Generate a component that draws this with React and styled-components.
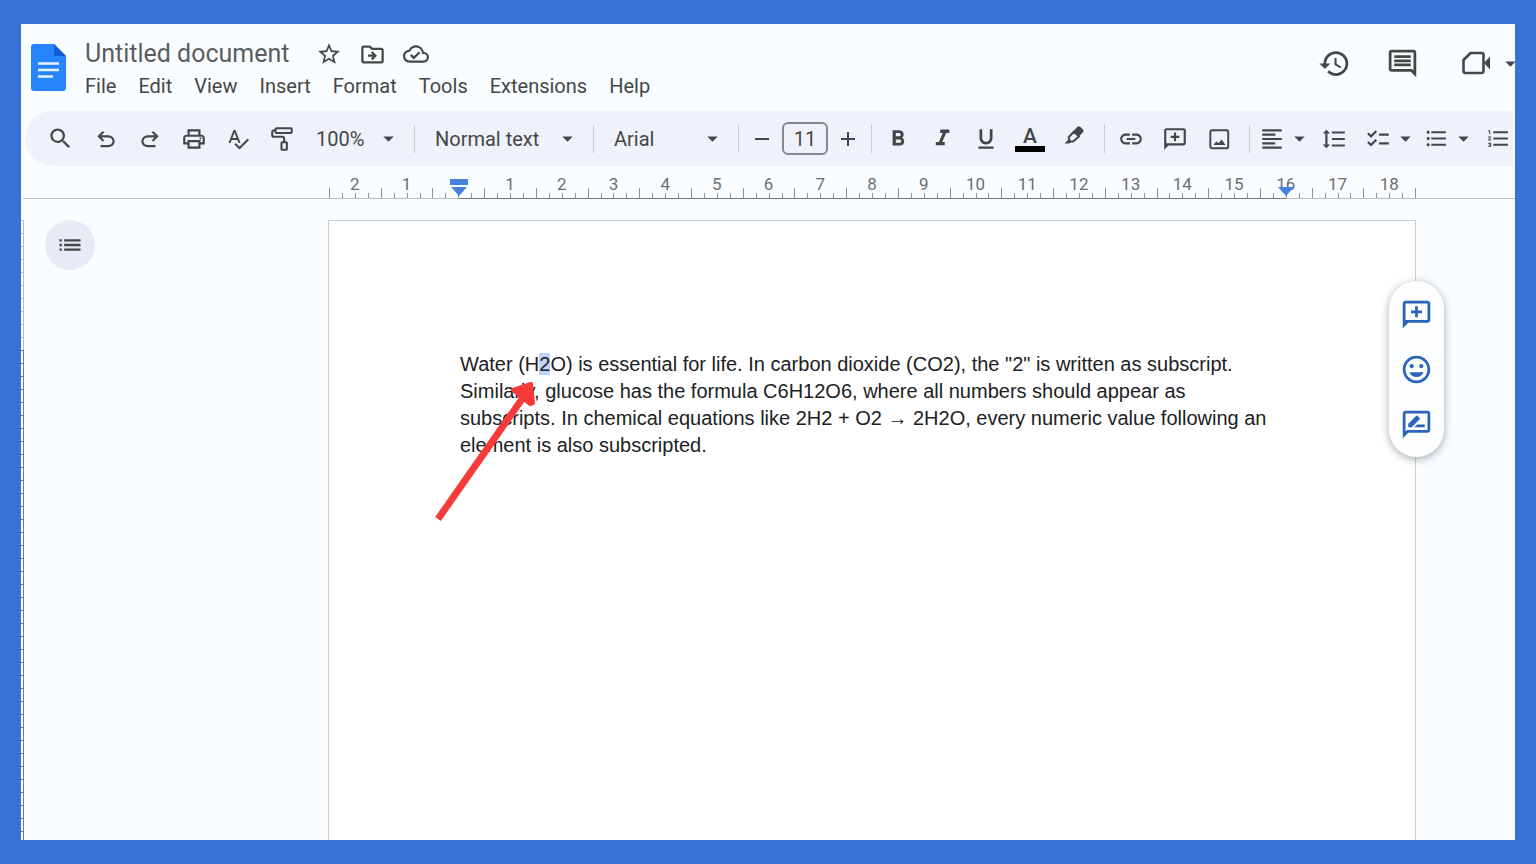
import { styled, createGlobalStyle } from 'styled-components';
import {
	MdArrowDropDown,
	MdAdd,
	MdChecklist,
	MdFormatAlignLeft,
	MdFormatBold,
	MdFormatItalic,
	MdFormatLineSpacing,
	MdFormatListBulleted,
	MdFormatListNumbered,
	MdFormatUnderlined,
	MdHistory,
	MdLink,
	MdList,
	MdOutlineCloudDone,
	MdOutlineComment,
	MdOutlineDriveFileMove,
	MdOutlineInsertEmoticon,
	MdOutlinePrint,
	MdOutlineRateReview,
	MdRemove,
	MdSearch,
	MdSpellcheck,
	MdStarBorder,
} from 'react-icons/md';

const GlobalStyle = createGlobalStyle`
	* {
		box-sizing: border-box;
	}

	body {
		margin: 0;
		font-family: Roboto, 'Liberation Sans', sans-serif;
		color: #444746;
	}

	button,
	input,
	select {
		margin: 0;
		padding: 0;
		border: 0;
		background: none;
		color: inherit;
		font: inherit;
	}

	svg {
		display: block;
		flex-shrink: 0;
	}
`;

const Frame = styled.div`
	display: flex;
	min-height: 100vh;
	padding: 24px 21px;
	background-color: #3871d8;
`;

const Editor = styled.div`
	display: flex;
	flex: 1;
	flex-direction: column;
	min-width: 0;
	overflow: hidden;
	background-color: #f9fdff;
`;

const Header = styled.header`
	display: flex;
	align-items: flex-start;
	height: 87px;
	padding: 14px 0 0 10px;
`;

const LogoLink = styled.a`
	margin: 6px 19px 0 0;
`;

const TitleRow = styled.div`
	display: flex;
	align-items: center;
	gap: 17px;
	height: 32px;
`;

const Title = styled.h1`
	margin: 0 10px 0 0;
	color: #5a5d60;
	font-size: 25px;
	font-weight: 400;
	line-height: 32px;
`;

const IconButton = styled.button`
	display: flex;
	flex-shrink: 0;
	justify-content: center;
	align-items: center;
	width: ${(props) => props.$width || 'auto'};
	height: 32px;
	color: ${(props) => props.$color || '#444746'};
	cursor: pointer;
`;

const Menu = styled.nav`
	display: flex;
	gap: 22px;
`;

const MenuButton = styled.button`
	font-size: 20px;
	line-height: 32px;
	cursor: pointer;
`;

const HeaderActions = styled.div`
	display: flex;
	align-items: center;
	gap: 35px;
	margin: 9px 0 0 auto;
`;

const Meet = styled.div`
	display: flex;
	align-items: center;
	margin-right: -8px;
`;

const Toolbar = styled.div`
	display: flex;
	align-items: center;
	height: 55px;
	margin: 0 2px 0 4px;
	padding-left: 11px;
	overflow: hidden;
	border-radius: 28px 0 0 28px;
	background-color: #eff2fa;
`;

const Separator = styled.span`
	flex-shrink: 0;
	width: 1px;
	height: 28px;
	background-color: #c7cace;
`;

const Group = styled.div`
	display: flex;
	flex-shrink: 0;
	align-items: center;
	gap: ${(props) => props.$gap || 0};
	padding: ${(props) => props.$padding || '0 8px 0 4px'};
`;

const SelectField = styled.label`
	display: grid;
	flex-shrink: 0;
	align-items: center;
	width: ${(props) => props.$width};

	& > * {
		grid-area: 1 / 1;
	}

	& > svg {
		justify-self: end;
		margin-right: 13px;
		pointer-events: none;
	}
`;

const Select = styled.select`
	width: 100%;
	height: 32px;
	padding-left: ${(props) => props.$indent};
	appearance: none;
	font-size: 20px;
`;

const SizeInput = styled.input`
	width: 46px;
	height: 33px;
	border: 2px solid #85888c;
	border-radius: 6px;
	font-size: 20px;
	text-align: center;
`;

const TextColor = styled.span`
	display: flex;
	flex-direction: column;
	align-items: center;
	width: 30px;
	border-bottom: 6px solid #000;
	font-size: 21px;
	font-weight: 500;
	line-height: 20px;
`;

const RulerRow = styled.div`
	display: grid;
	grid-template-columns: 306px minmax(0, 1fr) 99px;
	height: 33px;
	margin-left: 2px;
	border-bottom: 1px solid #b9bcc0;
`;

const Ruler = styled.div`
	position: relative;
	display: flex;
	grid-column: 2;
`;

const Cell = styled.div`
	display: grid;
	flex: 1;

	& > * {
		grid-area: 1 / 1;
	}
`;

const CellLabel = styled.span`
	align-self: start;
	justify-self: center;
	margin-top: 8px;
	color: #6b6e72;
	font-size: 17px;
	line-height: 20px;
`;

const Ticks = styled.span`
	display: flex;
	align-items: flex-end;
	align-self: end;
	height: 10px;
`;

const Tick = styled.i`
	flex: 1;
	height: ${(props) => (props.$tall ? '10px' : '5px')};
	border-left: 1px solid #8f9296;
`;

const LastTick = styled.i`
	align-self: flex-end;
	width: 1px;
	height: 10px;
	background-color: #8f9296;
`;

const TextSpan = styled.span`
	position: absolute;
	bottom: -1px;
	left: ${(props) => props.$from};
	right: ${(props) => props.$to};
	height: 1px;
	background-color: #77797d;
`;

const Marker = styled.svg`
	position: absolute;
	bottom: 2px;
	left: ${(props) => props.$at};
	transform: translateX(-50%);
`;

const Workspace = styled.div`
	display: flex;
	flex: 1;
`;

const SideRuler = styled.div`
	display: flex;
	flex-direction: column;
	width: 3px;
	padding-top: 21px;
`;

const SideTicks = styled.div`
	flex: ${(props) => (props.$height ? 'none' : '1')};
	height: ${(props) => props.$height || 'auto'};
	border-right: 1px solid ${(props) => props.$color};
	background-image: repeating-linear-gradient(${(props) => props.$color} 0 1px, transparent 1px 13px);
`;

const Canvas = styled.main`
	display: grid;
	flex: 1;
	grid-template-columns: 304px minmax(0, 1fr) 99px;
	padding-top: 21px;
`;

const OutlineButton = styled.button`
	display: flex;
	justify-content: center;
	align-items: center;
	width: 50px;
	height: 50px;
	margin-left: 21px;
	border-radius: 50%;
	background-color: #e8ebf5;
	cursor: pointer;
`;

const Page = styled.article`
	position: relative;
	padding: 130px 131px;
	border: 1px solid #cdd0d3;
	border-bottom: 0;
	background-color: #fff;
`;

const Paragraph = styled.p`
	margin: 0;
	color: #202124;
	font-family: 'Liberation Sans', Arial, sans-serif;
	font-size: 20px;
	line-height: 27px;
`;

const Selected = styled.mark`
	background-color: #bfd2fb;
	color: inherit;
`;

const Arrow = styled.svg`
	position: absolute;
	top: 158px;
	left: 101px;
`;

const SideActions = styled.div`
	position: absolute;
	top: 60px;
	right: -29px;
	display: flex;
	flex-direction: column;
	align-items: center;
	gap: 23px;
	width: 55px;
	padding: 17px 0;
	border-radius: 28px;
	background-color: #fbfdff;
	box-shadow: 0 2px 8px rgba(60, 64, 67, 0.45);
`;

const Logo = () => (
	<svg width="35" height="47" viewBox="0 0 35 47">
		<path fill="#2684fc" d="M3 0h20l12 12v32a3 3 0 0 1-3 3H3a3 3 0 0 1-3-3V3a3 3 0 0 1 3-3z" />
		<path fill="#0f5fd2" d="M23 0l12 12H25a2 2 0 0 1-2-2z" />
		<path stroke="#e3f3ff" strokeWidth="2.6" d="M7 19.5h21M7 26h21M7 32.500h15" />
	</svg>
);

const SymbolIcon = ({ size, d }) => (
	<svg width={size} height={size} viewBox="0 -980 960 960" fill="currentColor">
		<path d={d} />
	</svg>
);

const undoPath =
	'M280-200v-80h284q63 0 109.500-40T720-420q0-60-46.500-100T564-560H312l104 104-56 56-200-200 200-200 56 56-104 104h252q97 0 166.500 63T800-420q0 94-69.500 157T564-200H280Z';
const redoPath =
	'M396-200q-97 0-166.500-63T160-420q0-94 69.500-157T396-640h252L544-744l56-56 200 200-200 200-56-56 104-104H396q-63 0-109.500 40T240-420q0 60 46.500 100T396-280h284v80H396Z';

const PaintIcon = () => (
	<svg width="26" height="26" viewBox="0 0 24 24" fill="none" stroke="currentColor" strokeWidth="1.900">
		<rect x="6" y="2" width="15" height="4.500" rx="1" />
		<path d="M6 4H4.500a1.500 1.500 0 0 0-1.500 1.500V8.500A1.500 1.500 0 0 0 4.500 10H12.500a1.500 1.500 0 0 1 1.500 1.500V15" />
		<rect x="11.500" y="15" width="5" height="7" rx="0.800" />
	</svg>
);

const HighlighterIcon = () => (
	<svg width="20" height="28" viewBox="0 0 20 28">
		<path
			fill="none"
			stroke="currentColor"
			strokeWidth="2"
			strokeLinejoin="round"
			d="M4.500 12.500l5.500-6 5 5-6 5H6z"
		/>
		<path fill="currentColor" d="M9 6.500l4.500-4.700a2 2 0 0 1 2.700 0l2.700 2.700a2 2 0 0 1 0 2.700L14.500 12z" />
		<path fill="currentColor" d="M4.500 14.500L7 17l-1.500 1.500H.5z" />
	</svg>
);

const AddCommentIcon = ({ size }) => (
	<svg width={size} height={size} viewBox="0 0 24 24" fill="currentColor">
		<path d="M2 22V4c0-1.100.9-2 2-2h16c1.100 0 2 .9 2 2v12c0 1.100-.9 2-2 2H6l-4 4zM4 4v12h16V4H4z" />
		<path d="M11 6h2v3h3v2h-3v3h-2v-3H8V9h3z" />
	</svg>
);

const ImageIcon = () => (
	<svg width="26" height="26" viewBox="0 0 24 24">
		<rect x="4" y="4" width="16.500" height="16.500" rx="1.500" fill="none" stroke="currentColor" strokeWidth="1.800" />
		<path fill="currentColor" d="M7 17.500l2.500-3.500 2 2 3-3.500 3.500 5z" />
	</svg>
);

const VideoIcon = () => (
	<svg width="28" height="24" viewBox="0 0 28 24">
		<path
			fill="none"
			stroke="currentColor"
			strokeWidth="2.600"
			strokeLinejoin="round"
			d="M8.500 2h11a2 2 0 0 1 2 2v16a2 2 0 0 1-2 2h-16a2 2 0 0 1-2-2V9z"
		/>
		<path fill="currentColor" d="M22 12l6-6.500v13z" />
	</svg>
);

const menus = ['File', 'Edit', 'View', 'Insert', 'Format', 'Tools', 'Extensions', 'Help'];

// the page is 21 cm wide and its left margin ends 2.5 cm in
const rulerCells = Array.from({ length: 21 }, (_, i) => Math.abs(i - 2));

const Tool = ({ label, width = '44px', children }) => (
	<IconButton type="button" aria-label={label} $width={width}>
		{children}
	</IconButton>
);

const DropDown = ({ label, value, width, indent }) => (
	<SelectField $width={width}>
		<Select aria-label={label} defaultValue={value} $indent={indent}>
			<option>{value}</option>
		</Select>
		<MdArrowDropDown size={25} />
	</SelectField>
);

const DocHeader = () => (
	<Header>
		<LogoLink href="#" aria-label="Docs home">
			<Logo />
		</LogoLink>

		<div>
			<TitleRow>
				<Title>Untitled document</Title>
				<IconButton type="button" aria-label="Star">
					<MdStarBorder size={26} />
				</IconButton>
				<IconButton type="button" aria-label="Move">
					<MdOutlineDriveFileMove size={27} />
				</IconButton>
				<IconButton type="button" aria-label="Saved to Drive">
					<MdOutlineCloudDone size={26} />
				</IconButton>
			</TitleRow>

			<Menu>
				{menus.map((name) => (
					<MenuButton key={name} type="button">
						{name}
					</MenuButton>
				))}
			</Menu>
		</div>

		<HeaderActions>
			<IconButton type="button" aria-label="Version history">
				<MdHistory size={33} />
			</IconButton>
			<IconButton type="button" aria-label="Comments">
				<MdOutlineComment size={33} />
			</IconButton>
			<Meet>
				<IconButton type="button" aria-label="Join a call" $width="44px">
					<VideoIcon />
				</IconButton>
				<IconButton type="button" aria-label="Call options">
					<MdArrowDropDown size={25} />
				</IconButton>
			</Meet>
		</HeaderActions>
	</Header>
);

const DocToolbar = () => (
	<Toolbar role="toolbar">
		<Tool label="Search the menus" width="48px">
			<MdSearch size={27} />
		</Tool>
		<Tool label="Undo">
			<SymbolIcon size={26} d={undoPath} />
		</Tool>
		<Tool label="Redo">
			<SymbolIcon size={26} d={redoPath} />
		</Tool>
		<Tool label="Print">
			<MdOutlinePrint size={26} />
		</Tool>
		<Tool label="Spelling">
			<MdSpellcheck size={24} />
		</Tool>
		<Tool label="Paint format">
			<PaintIcon />
		</Tool>
		<DropDown label="Zoom" value="100%" width="110px" indent="12px" />
		<Separator />
		<DropDown label="Styles" value="Normal text" width="178px" indent="20px" />
		<Separator />
		<DropDown label="Font" value="Arial" width="144px" indent="20px" />
		<Separator />

		<Group $gap="2px" $padding="0 5px">
			<Tool label="Decrease font size" width="36px">
				<MdRemove size={24} />
			</Tool>
			<SizeInput aria-label="Font size" defaultValue="11" />
			<Tool label="Increase font size" width="36px">
				<MdAdd size={24} />
			</Tool>
		</Group>
		<Separator />

		<Group>
			<Tool label="Bold">
				<MdFormatBold size={26} />
			</Tool>
			<Tool label="Italic">
				<MdFormatItalic size={27} />
			</Tool>
			<Tool label="Underline">
				<MdFormatUnderlined size={26} />
			</Tool>
			<Tool label="Text color">
				<TextColor>A</TextColor>
			</Tool>
			<Tool label="Highlight color">
				<HighlighterIcon />
			</Tool>
		</Group>
		<Separator />

		<Group>
			<Tool label="Insert link">
				<MdLink size={26} />
			</Tool>
			<Tool label="Add comment">
				<AddCommentIcon size={26} />
			</Tool>
			<Tool label="Insert image">
				<ImageIcon />
			</Tool>
		</Group>
		<Separator />

		<Group $gap="4px" $padding="0 0 0 4px">
			<Group $padding="0">
				<Tool label="Align" width="36px">
					<MdFormatAlignLeft size={26} />
				</Tool>
				<Tool label="Align options" width="18px">
					<MdArrowDropDown size={25} />
				</Tool>
			</Group>
			<Tool label="Line spacing">
				<MdFormatLineSpacing size={26} />
			</Tool>
			<Group $padding="0">
				<Tool label="Checklist" width="36px">
					<MdChecklist size={26} />
				</Tool>
				<Tool label="Checklist options" width="18px">
					<MdArrowDropDown size={25} />
				</Tool>
			</Group>
			<Group $padding="0">
				<Tool label="Bulleted list" width="36px">
					<MdFormatListBulleted size={25} />
				</Tool>
				<Tool label="Bulleted list options" width="18px">
					<MdArrowDropDown size={25} />
				</Tool>
			</Group>
			<Tool label="Numbered list">
				<MdFormatListNumbered size={25} />
			</Tool>
		</Group>
	</Toolbar>
);

const DocRuler = () => (
	<RulerRow>
		<Ruler>
			{rulerCells.map((cm, i) => (
				<Cell key={i}>
					<CellLabel>{cm || ''}</CellLabel>
					<Ticks>
						<Tick $tall />
						<Tick />
						<Tick />
						<Tick />
					</Ticks>
				</Cell>
			))}
			<LastTick />
			<TextSpan $from="12%" $to="12%" />
			<Marker $at="12%" width="18" height="17" viewBox="0 0 18 17" fill="#4683e0">
				<path d="M0 0h18v6H0zM1 8h16l-8 9z" />
			</Marker>
			<Marker $at="88%" width="16" height="9" viewBox="0 0 16 9" fill="#4683e0">
				<path d="M0 0h16L8 9z" />
			</Marker>
		</Ruler>
	</RulerRow>
);

const App = () => {
	return (
		<Frame>
			<GlobalStyle />
			<Editor>
				<DocHeader />
				<DocToolbar />
				<DocRuler />

				<Workspace>
					<SideRuler>
						<SideTicks $height="130px" $color="#b9bcc0" />
						<SideTicks $color="#77797d" />
					</SideRuler>

					<Canvas>
						<OutlineButton type="button" aria-label="Show outline">
							<MdList size={28} />
						</OutlineButton>

						<Page>
							<Paragraph>
								Water (H<Selected>2</Selected>O) is essential for life. In carbon dioxide (CO2), the
								"2" is written as subscript. Similarly, glucose has the formula C6H12O6, where all
								numbers should appear as subscripts. In chemical equations like 2H2 + O2 → 2H2O,
								every numeric value following an element is also subscripted.
							</Paragraph>

							<Arrow width="112" height="144" viewBox="0 0 112 144">
								<path stroke="#f73a3a" strokeWidth="7" d="M8 140L92 20" />
								<path
									fill="#f73a3a"
									stroke="#f73a3a"
									strokeWidth="4"
									strokeLinejoin="round"
									d="M83 11l18-6 2 19-3 1z"
								/>
							</Arrow>

							<SideActions>
								<IconButton type="button" aria-label="Add comment" $color="#2b63b8">
									<AddCommentIcon size={33} />
								</IconButton>
								<IconButton type="button" aria-label="Add emoji reaction" $color="#2b63b8">
									<MdOutlineInsertEmoticon size={33} />
								</IconButton>
								<IconButton type="button" aria-label="Suggest edits" $color="#2b63b8">
									<MdOutlineRateReview size={33} />
								</IconButton>
							</SideActions>
						</Page>
					</Canvas>
				</Workspace>
			</Editor>
		</Frame>
	);
};

export default App;
